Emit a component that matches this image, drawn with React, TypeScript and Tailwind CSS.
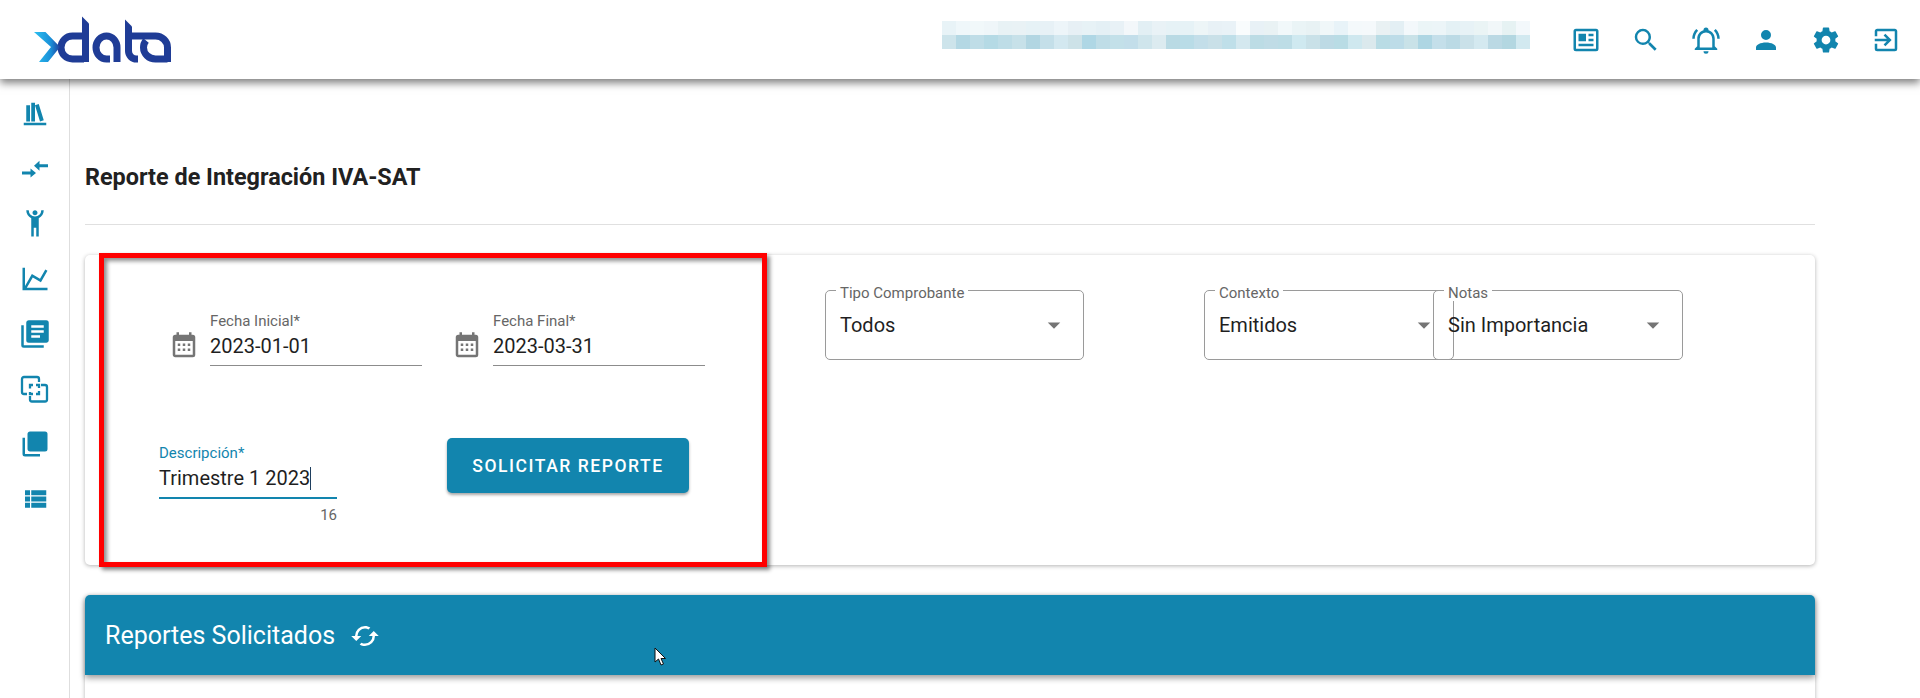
const TEAL = "#1285ae";

const topRow = [
  "#e8f3f7", "#eff7fa", "#f1f8fa", "#eff6f9", "#e8f2f5", "#e9f2f5", "#e6f2f6", "#e7f1f6", "#edf5f9", "#e7f0f5",
  "#e7f2f6", "#e4f0f5", "#e8f1f6", "#f3f7fa", "#e2eff4", "#e9f2f6", "#e6f2f6", "#e6f2f6", "#edf5f7", "#e8f1f6", "#e9f2f7",
  "#f9fcfd", "#e8f1f6", "#e9f2f4", "#f1f8fa", "#eaf4f6", "#e8f2f4", "#f0f7f9", "#e8f3f8", "#f4f9fb", "#f5f9fb",
  "#e9f1f3", "#e3eff4", "#f3f8fb", "#ebf5f7", "#ecf5f8", "#e4f1f5", "#e7f2f6", "#eaf4f5", "#f1f7f9", "#e6f2f3", "#f3f8fb",
];

const bottomRow = [
  "#cde4eb", "#b4d8e4", "#bfdde7", "#b5dae5", "#bedde7", "#c7e1e9", "#b2d6e2", "#c4dfe9", "#d3e8f0", "#cde2e8",
  "#afd7e5", "#bfdde7", "#c3e0e9", "#c3deea", "#cfe5ec", "#dcebf0", "#b9dae4", "#b9dce7", "#c3dee9", "#c9e0e8", "#bfdfe9",
  "#d4e8ef", "#bcdce5", "#c0dce6", "#bddde6", "#cfe9f0", "#c9e1e8", "#bddae5", "#b9dce5", "#cfe8ef", "#dbe9ed",
  "#b9dce5", "#bddce8", "#c9e2e8", "#aed6e3", "#c4dfea", "#bbdae5", "#cae1e9", "#d4e9f0", "#bbd9e4", "#b3d7e1", "#d2e9f0",
];

function Mdi({ d, size = 30, color = TEAL, evenodd = false }: { d: string; size?: number; color?: string; evenodd?: boolean }) {
  return (
    <svg width={size} height={size} viewBox="0 0 24 24" className="shrink-0 block">
      <path d={d} fill={color} fillRule={evenodd ? "evenodd" : "nonzero"} />
    </svg>
  );
}

const icons = {
  newspaper:
    "M20 3H4A2 2 0 0 0 2 5V19A2 2 0 0 0 4 21H20A2 2 0 0 0 22 19V5A2 2 0 0 0 20 3M20 19H4V5H20V19M6 7H12V13H6V7M14 7H18V9H14V7M14 11H18V13H14V11M6 15H18V17H6V15Z",
  magnify:
    "M9.5,3A6.5,6.5 0 0,1 16,9.5C16,11.11 15.41,12.59 14.44,13.73L14.71,14H15.5L20.5,19L19,20.5L14,15.5V14.71L13.73,14.44C12.59,15.41 11.11,16 9.5,16A6.5,6.5 0 0,1 3,9.5A6.5,6.5 0 0,1 9.5,3M9.5,5C7,5 5,7 5,9.5C5,12 7,14 9.5,14C12,14 14,12 14,9.5C14,7 12,5 9.5,5Z",
  bell:
    "M10,21H14A2,2 0 0,1 12,23A2,2 0 0,1 10,21M21,19V20H3V19L5,17V11C5,7.9 7.03,5.17 10,4.29C10,4.19 10,4.1 10,4A2,2 0 0,1 12,2A2,2 0 0,1 14,4C14,4.1 14,4.19 14,4.29C16.97,5.17 19,7.9 19,11V17L21,19M17,11A5,5 0 0,0 12,6A5,5 0 0,0 7,11V18H17V11M19.75,3.19L18.33,4.61C20.04,6.3 21,8.6 21,11H23C23,8.07 21.84,5.25 19.75,3.19M1,11H3C3,8.6 3.96,6.3 5.67,4.61L4.25,3.19C2.16,5.25 1,8.07 1,11Z",
  account:
    "M12,4A4,4 0 0,1 16,8A4,4 0 0,1 12,12A4,4 0 0,1 8,8A4,4 0 0,1 12,4M12,14C16.42,14 20,15.79 20,18V20H4V18C4,15.79 7.58,14 12,14Z",
  cog:
    "M12,15.5A3.5,3.5 0 0,1 8.5,12A3.5,3.5 0 0,1 12,8.5A3.5,3.5 0 0,1 15.5,12A3.5,3.5 0 0,1 12,15.5M19.43,12.97C19.47,12.65 19.5,12.33 19.5,12C19.5,11.67 19.47,11.34 19.43,11L21.54,9.37C21.73,9.22 21.78,8.95 21.66,8.73L19.66,5.27C19.54,5.05 19.27,4.96 19.05,5.05L16.56,6.05C16.04,5.66 15.5,5.32 14.87,5.07L14.5,2.42C14.46,2.18 14.25,2 14,2H10C9.75,2 9.54,2.18 9.5,2.42L9.13,5.07C8.5,5.32 7.96,5.66 7.44,6.05L4.95,5.05C4.73,4.96 4.46,5.05 4.34,5.27L2.34,8.73C2.21,8.95 2.27,9.22 2.46,9.37L4.57,11C4.53,11.34 4.5,11.67 4.5,12C4.5,12.33 4.53,12.65 4.57,12.97L2.46,14.63C2.27,14.78 2.21,15.05 2.34,15.27L4.34,18.73C4.46,18.95 4.73,19.03 4.95,18.95L7.44,17.94C7.96,18.34 8.5,18.68 9.13,18.93L9.5,21.58C9.54,21.82 9.75,22 10,22H14C14.25,22 14.46,21.82 14.5,21.58L14.87,18.93C15.5,18.67 16.04,18.34 16.56,17.94L19.05,18.95C19.27,19.03 19.54,18.95 19.66,18.73L21.66,15.27C21.78,15.05 21.73,14.78 21.54,14.63L19.43,12.97Z",
  exit:
    "M19,3H5C3.89,3 3,3.89 3,5V9H5V5H19V19H5V15H3V19A2,2 0 0,0 5,21H19A2,2 0 0,0 21,19V5C21,3.89 20.1,3 19,3M10.08,15.58L11.5,17L16.5,12L11.5,7L10.08,8.41L12.67,11H3V13H12.67L10.08,15.58Z",
  bookshelf: "M9 3V18H12V3H9M12 5L16 18L19 17L15 4L12 5M5 5V18H8V5H5M3 19V21H21V19H3Z",
  human:
    "M5,1C5,3.7 6.56,6.16 9,7.32V22H11V15H13V22H15V7.31C17.44,6.16 19,3.7 19,1H17A5,5 0 0,1 12,6A5,5 0 0,1 7,1M12,1C10.89,1 10,1.89 10,3C10,4.11 10.89,5 12,5C13.11,5 14,4.11 14,3C14,1.89 13.11,1 12,1Z",
  chart:
    "M16,11.78L20.24,4.45L21.97,5.45L16.74,14.5L10.23,10.75L5.46,19H22V21H2V3H4V17.54L9.5,8L16,11.78Z",
  textBoxes:
    "M16 15H9V13H16V15M19 11H9V9H19V11M19 7H9V5H19V7M3 5V21H19V23H3A2 2 0 0 1 1 21V5H3M21 1A2 2 0 0 1 23 3V17C23 18.11 22.11 19 21 19H7A2 2 0 0 1 5 17V3C5 1.89 5.89 1 7 1H21Z",
  blankMultiple:
    "M22,16A2,2 0 0,1 20,18H8C6.89,18 6,17.1 6,16V4C6,2.89 6.89,2 8,2H20A2,2 0 0,1 22,4V16M16,20V22H4A2,2 0 0,1 2,20V7H4V20H16Z",
  list: "M9,5V9H21V5M9,19H21V15H9M9,14H21V10H9M4,9H8V5H4M4,19H8V15H4M4,14H8V10H4V14Z",
  calendar:
    "M9,10V12H7V10H9M13,10V12H11V10H13M17,10V12H15V10H17M19,3A2,2 0 0,1 21,5V19A2,2 0 0,1 19,21H5C3.89,21 3,20.1 3,19V5A2,2 0 0,1 5,3H6V1H8V3H16V1H18V3H19M19,19V8H5V19H19M9,14V16H7V14H9M13,14V16H11V14H13M17,14V16H15V14H17Z",
  cached:
    "M19,8L15,12H18A6,6 0 0,1 12,18C11,18 10.03,17.75 9.2,17.3L7.74,18.76C8.97,19.54 10.43,20 12,20A8,8 0 0,0 20,12H23M6,12A6,6 0 0,1 12,6C13,6 13.97,6.25 14.8,6.7L16.26,5.24C15.03,4.46 13.57,4 12,4A8,8 0 0,0 4,12H1L5,16L9,12",
  menuDown: "M7,10L12,15L17,10H7Z",
};

function Logo() {
  return (
    <svg width="140" height="50" viewBox="0 0 140 50" className="block shrink-0">
      <defs>
        <linearGradient id="xArm" x1="0" y1="0" x2="1" y2="0">
          <stop offset="0" stopColor="#2cc0f0" />
          <stop offset="0.65" stopColor="#1a8fd8" />
          <stop offset="1" stopColor="#1f3f9c" />
        </linearGradient>
      </defs>
      <g fill="none" stroke="#1f3c96" strokeWidth="7">
        <path d="M50 21H38.5A11.5 11.5 0 0 0 38.5 44H50" />
        <path d="M83 47V32.5A10.5 11.5 0 1 0 72.5 44H76" />
        <path d="M94.5 22V36A8 8 0 0 0 102.5 44H104" />
        <path d="M96 21H121.5A12 11.5 0 0 1 133.5 32.5V47" />
        <path d="M133.5 44H121.5A12 11.5 0 0 1 109.5 32.5A12 11.5 0 0 1 112 25.5" />
      </g>
      <path d="M48 1.5L55 8.5V47H48Z" fill="#1f3c96" />
      <path d="M91 4.5L98 11.5V25H91Z" fill="#1f3c96" />
      <path d="M0 17H11.5L26 32L14 47H5L17 32Z" fill="url(#xArm)" />
    </svg>
  );
}

function CompareIcon() {
  return (
    <svg width="30" height="30" viewBox="0 0 30 30" className="block shrink-0" fill="none" stroke={TEAL} strokeWidth="2.3">
      <path d="M7 20H4A2 2 0 0 1 2 18V5A2 2 0 0 1 4 3H17A2 2 0 0 1 19 5V8" />
      <path d="M21 11H25A2 2 0 0 1 27 13V25.5A2 2 0 0 1 25 27.5H12A2 2 0 0 1 10 25.5V22" />
      <path d="M10 14.5V11H13M16 11H19V14M19 17V20H16M13 20H10V18" />
    </svg>
  );
}

function SwapIcon() {
  return (
    <svg width="30" height="30" viewBox="0 0 30 30" className="block shrink-0" fill={TEAL}>
      <path d="M14 11.7L19.5 6.7V10.2H28V13.2H19.5V16.7Z" />
      <path d="M16 19L10.5 14.5V17.5H2V20.5H10.5V23.5Z" />
    </svg>
  );
}

function DateField({ label, value }: { label: string; value: string }) {
  return (
    <div className="flex items-end w-[254px]">
      <div className="ml-[1px] mr-[11px] mb-[5px]">
        <Mdi d={icons.calendar} color="#757575" />
      </div>
      <div className="w-[212px] border-b border-[#8c8c8c] h-[54px]">
        <div className="text-[15px] leading-[18px] text-[#666666]">{label}</div>
        <div className="text-[20px] leading-[30px] mt-[1px] text-[#1f1f1f]">{value}</div>
      </div>
    </div>
  );
}

function OutlinedSelect({ label, value, width, className }: { label: string; value: string; width: string; className?: string }) {
  return (
    <div className={`relative h-[70px] rounded-[5px] border border-[#9a9a9a] flex items-center justify-between pl-[14px] pr-[14px] ${width} ${className ?? ""}`}>
      <span className="absolute -top-[6px] left-[10px] bg-white px-1 text-[15px] leading-[16px] text-[#666666]">{label}</span>
      <span className="text-[20px] text-[#1f1f1f]">{value}</span>
      <Mdi d={icons.menuDown} color="#757575" />
    </div>
  );
}

export default function App() {
  return (
    <div className="relative h-[698px] w-[1920px] overflow-hidden bg-white font-['Roboto',sans-serif]">
      <header className="relative z-20 flex h-[79px] items-center bg-white pl-[34px] pr-[4px] shadow-[0_4px_8px_rgba(0,0,0,0.5)]">
        <Logo />
        <div className="ml-auto mr-[26px] -mt-[9px] flex flex-col">
          <div className="flex">
            {topRow.map((c, i) => (
              <div key={i} className="h-[14px] w-[14px]" style={{ backgroundColor: c }} />
            ))}
          </div>
          <div className="flex">
            {bottomRow.map((c, i) => (
              <div key={i} className="h-[14px] w-[14px]" style={{ backgroundColor: c }} />
            ))}
          </div>
        </div>
        {[icons.newspaper, icons.magnify, icons.bell, icons.account, icons.cog, icons.exit].map((d, i) => (
          <div key={i} className="flex w-[60px] justify-center">
            <Mdi d={d} />
          </div>
        ))}
      </header>

      <div className="flex">
        <aside className="flex h-[619px] w-[70px] shrink-0 flex-col items-center gap-[25px] border-r-[1.5px] border-[#dedede] pt-[20px]">
          <Mdi d={icons.bookshelf} />
          <SwapIcon />
          <Mdi d={icons.human} />
          <Mdi d={icons.chart} />
          <Mdi d={icons.textBoxes} evenodd />
          <CompareIcon />
          <Mdi d={icons.blankMultiple} />
          <Mdi d={icons.list} />
        </aside>

        <main className="ml-[15px] w-[1730px]">
          <h1 className="mt-[83px] text-[23.4px] font-bold leading-[30px] text-[#212121]">Reporte de Integración IVA-SAT</h1>
          <div className="mt-[32px] border-t border-[#e0e0e0]" />

          <section className="relative mt-[30px] flex h-[310px] rounded-[5px] bg-white shadow-[0_1px_4px_rgba(0,0,0,0.3)]">
            <div className="w-[740px] shrink-0">
              <div className="flex gap-[29px] pl-[83px] pt-[57px]">
                <DateField label="Fecha Inicial*" value="2023-01-01" />
                <DateField label="Fecha Final*" value="2023-03-31" />
              </div>
              <div className="flex pl-[74px] pt-[72px]">
                <div className="w-[178px] pt-[6px]">
                  <div className="text-[15px] leading-[18px] text-[#1285ae]">Descripción*</div>
                  <div className="mt-[1px] flex h-[36px] items-center border-b-2 border-[#1285ae] pb-[4px] text-[20px] leading-[30px] text-[#1f1f1f]">
                    Trimestre 1 2023
                    <span className="inline-block h-[23px] w-px bg-[#1f3f5f]" />
                  </div>
                  <div className="mt-[7px] text-right text-[15px] leading-[18px] text-[#666666]">16</div>
                </div>
                <button className="ml-[110px] h-[55px] w-[242px] rounded-[5px] bg-[#1285ae] pt-[1px] text-[17.5px] font-medium tracking-[1.55px] text-white shadow-[0_2px_3px_rgba(0,0,0,0.35)]">
                  SOLICITAR REPORTE
                </button>
              </div>
            </div>

            <div className="flex pt-[35px]">
              <OutlinedSelect label="Tipo Comprobante" value="Todos" width="w-[259px]" />
              <OutlinedSelect label="Contexto" value="Emitidos" width="w-[250px]" className="ml-[120px]" />
              <OutlinedSelect label="Notas" value="Sin Importancia" width="w-[250px]" className="-ml-[21px]" />
            </div>

            <div className="pointer-events-none absolute -top-[2px] left-[14px] h-[314px] w-[668px] border-[5px] border-[#ff0000] shadow-[3px_3px_4px_rgba(0,0,0,0.45),inset_3px_3px_4px_rgba(0,0,0,0.45)]" />
          </section>

          <section className="mt-[30px] h-[200px] rounded-t-[5px] bg-white shadow-[0_1px_4px_rgba(0,0,0,0.3)]">
            <div className="relative flex h-[80px] items-center rounded-t-[5px] bg-[#1285ae] pl-[20px] pt-[2px] text-white shadow-[0_3px_6px_rgba(0,0,0,0.4)]">
              <span className="text-[25px]">Reportes Solicitados</span>
              <div className="ml-[15px]">
                <Mdi d={icons.cached} color="#ffffff" />
              </div>
              <svg width="14" height="20" viewBox="0 0 14 20" className="absolute left-[569px] top-[52px]">
                <path d="M1 1V15L4.5 12L7 18L9.5 17L7 11.5H11.5Z" fill="#ffffff" stroke="#111111" strokeWidth="1" />
              </svg>
            </div>
          </section>
        </main>
      </div>
    </div>
  );
}
